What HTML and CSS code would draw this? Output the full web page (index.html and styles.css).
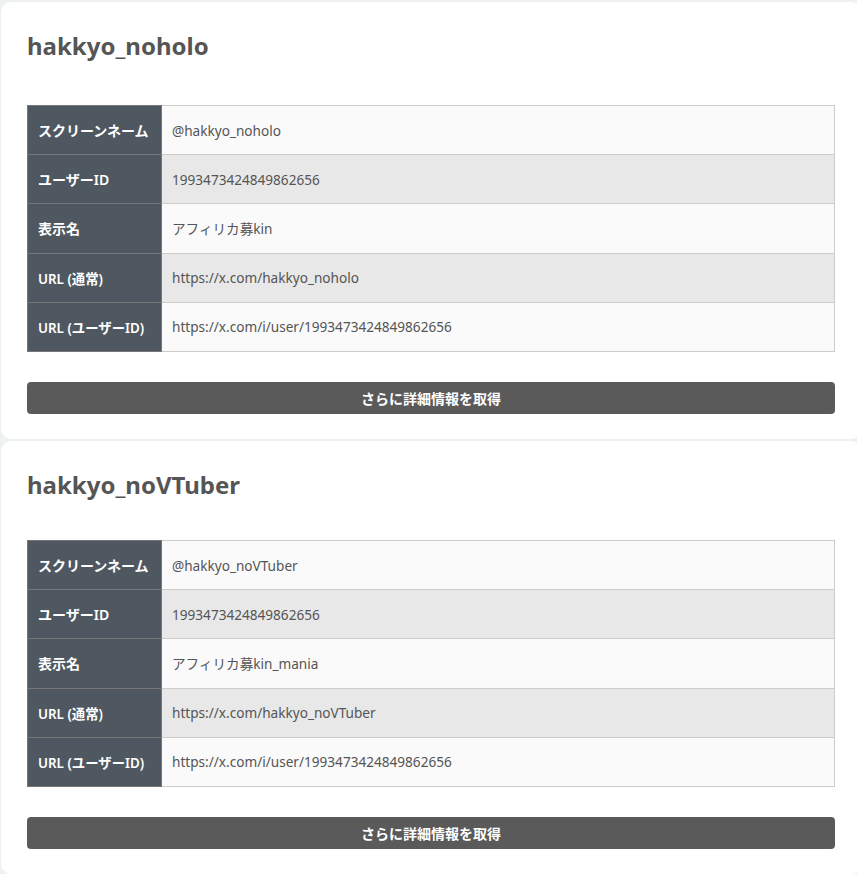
FILE: index.html
```html
<!DOCTYPE html>
<html lang="ja">
<head>
<meta charset="utf-8">
<title>hakkyo</title>
<link rel="stylesheet" href="styles.css">
</head>
<body>
<div class="page">
  <section class="card first">
    <h2 class="title">hakkyo_noholo</h2>
    <table class="info">
      <tr class="odd"><th>スクリーンネーム</th><td>@hakkyo_noholo</td></tr>
      <tr class="even"><th>ユーザーID</th><td>1993473424849862656</td></tr>
      <tr class="odd"><th>表示名</th><td>アフィリカ募kin</td></tr>
      <tr class="even"><th class="small">URL (通常)</th><td>https://x.com/hakkyo_noholo</td></tr>
      <tr class="odd"><th class="small">URL (ユーザーID)</th><td>https://x.com/i/user/1993473424849862656</td></tr>
    </table>
    <button class="more">さらに詳細情報を取得</button>
  </section>
  <section class="card second">
    <h2 class="title">hakkyo_noVTuber</h2>
    <table class="info">
      <tr class="odd"><th>スクリーンネーム</th><td>@hakkyo_noVTuber</td></tr>
      <tr class="even"><th>ユーザーID</th><td>1993473424849862656</td></tr>
      <tr class="odd"><th>表示名</th><td>アフィリカ募kin_mania</td></tr>
      <tr class="even"><th class="small">URL (通常)</th><td>https://x.com/hakkyo_noVTuber</td></tr>
      <tr class="odd"><th class="small">URL (ユーザーID)</th><td>https://x.com/i/user/1993473424849862656</td></tr>
    </table>
    <button class="more">さらに詳細情報を取得</button>
  </section>
</div>
</body>
</html>
```
FILE: styles.css
```css
html, body {
  margin: 0;
  padding: 0;
  background: #eef1f1;
  overflow: hidden;
}
body {
  font-family: "Noto Sans", "Noto Sans CJK JP", sans-serif;
  color: #555;
}
.page {
  width: 860px;
  padding: 2px 0 0 1px;
  display: flex;
  flex-direction: column;
  gap: 2px;
}
.card {
  background: #fff;
  border-radius: 10px;
  padding: 24px 26px 25px 26px;
  width: 808px;
}
.title {
  margin: 0;
  font-size: 24px;
  font-weight: 700;
  line-height: 40px;
  color: #555;
  height: 79px;
}
.card.second .title {
  height: 75px;
}
.info {
  width: 808px;
  border-collapse: collapse;
  table-layout: fixed;
}
.info th {
  width: 113px;
  background: #4f5861;
  color: #fff;
  font-weight: 600;
  font-size: 14px;
  text-align: left;
  padding: 0 10px;
  height: 48.2px;
  border: 1px solid #777;
  white-space: nowrap;
}
.info th.small {
  font-size: 13.4px;
}
.info td {
  font-size: 13.6px;
  padding: 0 10px;
  height: 48.2px;
  border: 1px solid #ccc;
  color: #555;
}
.info tr.odd td { background: #fafafa; }
.info tr.even td { background: #e8e8e8; }
.more {
  display: block;
  margin-top: 30px;
  width: 808px;
  height: 32px;
  border: none;
  border-radius: 4px;
  background: #5a5a5a;
  color: #fff;
  font-family: "Noto Sans", "Noto Sans CJK JP", sans-serif;
  font-size: 14px;
  font-weight: 600;
  padding: 0;
}
```
